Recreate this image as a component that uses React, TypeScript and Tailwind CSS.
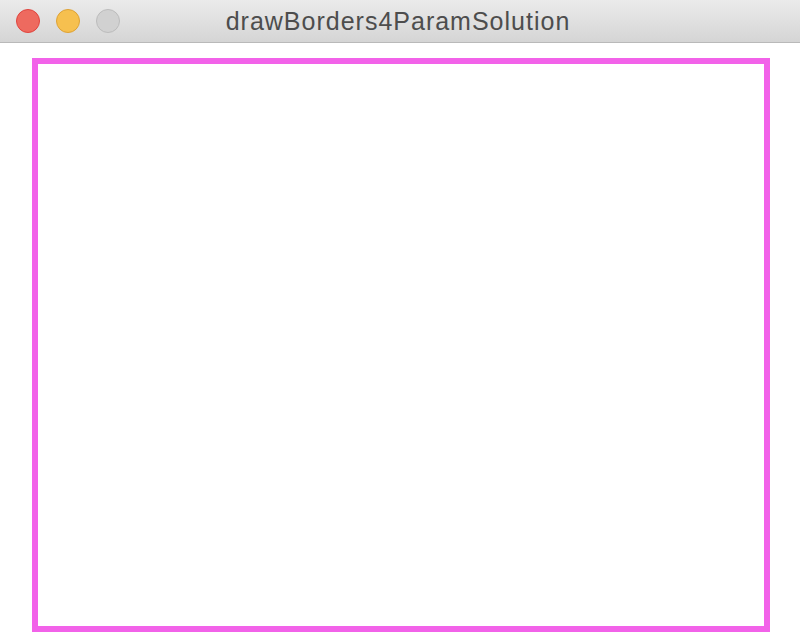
import React from 'react';

const App: React.FC = () => {
  return (
    <div className="flex h-[644px] w-[800px] flex-col overflow-hidden bg-white">
      {/* Title bar */}
      <div className="relative flex h-[43px] shrink-0 items-center border-b border-[#b9b9b9] bg-gradient-to-b from-[#ebebeb] to-[#d5d5d5]">
        <div className="flex items-center gap-4 pl-4">
          <span className="block h-6 w-6 rounded-full border border-[#e0443e] bg-[#ee6a5f]" />
          <span className="block h-6 w-6 rounded-full border border-[#dea236] bg-[#f6c04f]" />
          <span className="block h-6 w-6 rounded-full border border-[#bcbcbc] bg-[#d1d1d1]" />
        </div>
        <div className="absolute inset-0 flex items-center justify-center pr-1">
          <span className="font-['Liberation_Sans',Arial,sans-serif] text-[25px] leading-none tracking-[1px] text-[#4d4d4d]">
            drawBorders4ParamSolution
          </span>
        </div>
      </div>

      {/* Canvas */}
      <div className="flex-1 pl-8 pt-[15px]">
        <div className="h-[574px] w-[738px] border-[6px] border-[#f262e9] bg-white" />
      </div>
    </div>
  );
};

export default App;
